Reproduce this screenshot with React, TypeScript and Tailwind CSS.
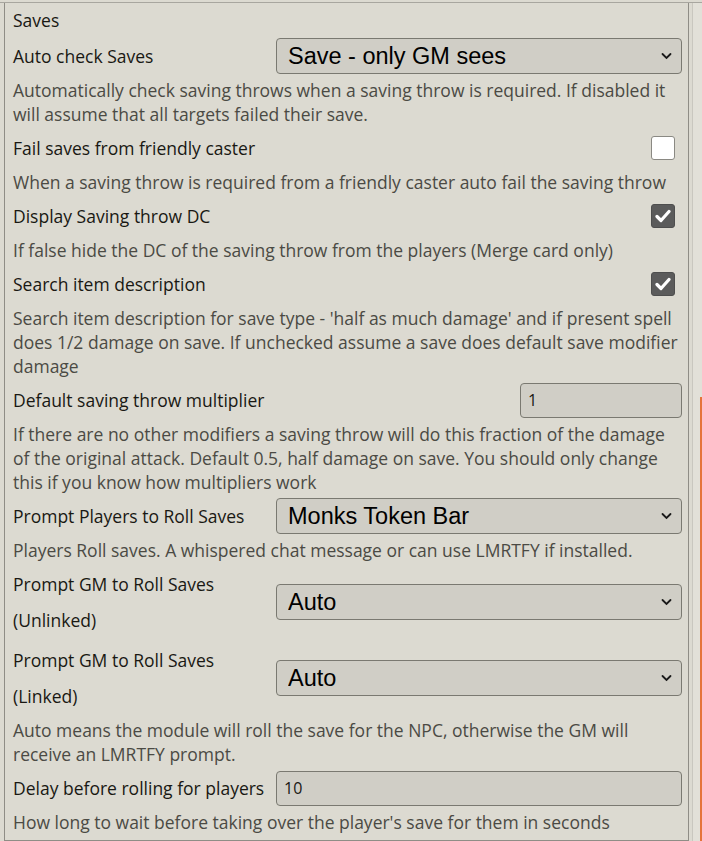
import React from "react"

const font = { fontFamily: '"Open Sans", "Noto Sans", sans-serif' }

function Chevron() {
  return (
    <svg
      width="11"
      height="7"
      viewBox="0 0 11 7"
      className="pointer-events-none absolute right-[10px] top-1/2 -translate-y-1/2"
    >
      <polyline points="1.5,1.5 5.5,5.5 9.5,1.5" fill="none" stroke="#1a1a1a" strokeWidth="1.8" strokeLinecap="round" />
    </svg>
  )
}

function Select({ value }: { value: string }) {
  return (
    <div className="relative h-[36px] w-[406px] shrink-0">
      <select
        defaultValue={value}
        className="h-full w-full appearance-none rounded-[4px] border border-[#7a7971] bg-black/[0.05] pl-[11px] text-[23.5px] text-black outline-none"
        style={{ fontFamily: '"Liberation Sans", Arial, sans-serif' }}
      >
        <option>{value}</option>
      </select>
      <Chevron />
    </div>
  )
}

function Check({ checked }: { checked?: boolean }) {
  return (
    <div
      className={`mr-[7px] flex h-[24px] w-[24px] shrink-0 items-center justify-center rounded-[3px] border ${
        checked ? "border-[#4e4e4e] bg-[#5b5b5b]" : "border-[#8a8983] bg-white"
      }`}
    >
      {checked && (
        <svg width="16" height="14" viewBox="0 0 16 14">
          <polyline points="2,7.5 6,11.5 14,2.5" fill="none" stroke="white" strokeWidth="3.2" strokeLinecap="round" strokeLinejoin="round" />
        </svg>
      )}
    </div>
  )
}

function Hint({ children }: { children: React.ReactNode }) {
  return <p className="leading-[24px] text-[#4b4a44]">{children}</p>
}

function TextInput({ value, width }: { value: string; width: string }) {
  return (
    <input
      defaultValue={value}
      className={`${width} h-[35px] shrink-0 rounded-[4px] border border-[#7a7971] bg-black/[0.05] px-[7px] text-[16px] text-[#191813] outline-none`}
      style={font}
    />
  )
}

export default function App() {
  return (
    <div className="h-[841px] w-[702px] overflow-hidden bg-[#dcdad1] text-[17.5px] text-[#191813]" style={font}>
      <div className="mt-[2px] flex h-[839px] border-t border-[#a8a69f]">
        <div className="ml-[4px] w-[685px] border-x border-b border-[#8f8d86] pl-[8px] pr-[6px]">
          <h3 className="h-[35px] leading-[35px]">Saves</h3>
          <div className="flex flex-col gap-1">
            <div className="flex h-[36px] items-center">
              <label className="w-[263px] shrink-0">Auto check Saves</label>
              <Select value="Save - only GM sees" />
            </div>
            <Hint>
              Automatically check saving throws when a saving throw is required. If disabled it
              <br />
              will assume that all targets failed their save.
            </Hint>

            <div className="flex h-[36px] items-center">
              <label className="flex-1">Fail saves from friendly caster</label>
              <Check />
            </div>
            <Hint>When a saving throw is required from a friendly caster auto fail the saving throw</Hint>

            <div className="flex h-[36px] items-center">
              <label className="flex-1">Display Saving throw DC</label>
              <Check checked />
            </div>
            <Hint>If false hide the DC of the saving throw from the players (Merge card only)</Hint>

            <div className="flex h-[36px] items-center">
              <label className="flex-1">Search item description</label>
              <Check checked />
            </div>
            <Hint>
              Search item description for save type - 'half as much damage' and if present spell
              <br />
              does 1/2 damage on save. If unchecked assume a save does default save modifier
              <br />
              damage
            </Hint>

            <div className="flex h-[36px] items-center">
              <label className="flex-1">Default saving throw multiplier</label>
              <TextInput value="1" width="w-[162px]" />
            </div>
            <Hint>
              If there are no other modifiers a saving throw will do this fraction of the damage
              <br />
              of the original attack. Default 0.5, half damage on save. You should only change
              <br />
              this if you know how multipliers work
            </Hint>

            <div className="flex h-[36px] items-center">
              <label className="w-[263px] shrink-0">Prompt Players to Roll Saves</label>
              <Select value="Monks Token Bar" />
            </div>
            <Hint>Players Roll saves. A whispered chat message or can use LMRTFY if installed.</Hint>

            <div className="flex h-[72px] items-center">
              <label className="w-[263px] shrink-0 leading-[36px]">
                Prompt GM to Roll Saves
                <br />
                (Unlinked)
              </label>
              <Select value="Auto" />
            </div>

            <div className="flex h-[72px] items-center">
              <label className="w-[263px] shrink-0 leading-[36px]">
                Prompt GM to Roll Saves
                <br />
                (Linked)
              </label>
              <Select value="Auto" />
            </div>
            <Hint>
              Auto means the module will roll the save for the NPC, otherwise the GM will
              <br />
              receive an LMRTFY prompt.
            </Hint>

            <div className="flex h-[36px] items-center">
              <label className="w-[263px] shrink-0 whitespace-nowrap">Delay before rolling for players</label>
              <TextInput value="10" width="w-[406px]" />
            </div>
            <Hint>How long to wait before taking over the player's save for them in seconds</Hint>
          </div>
        </div>
        <div className="ml-[3px] flex flex-1 border-l border-[#c9c7bf] bg-[#e2e0d8]">
          <div className="flex-1" />
          <div className="flex w-[2px] flex-col">
            <div className="h-[394px]" />
            <div className="flex-1 bg-[#e5733a]" />
          </div>
        </div>
      </div>
    </div>
  )
}
